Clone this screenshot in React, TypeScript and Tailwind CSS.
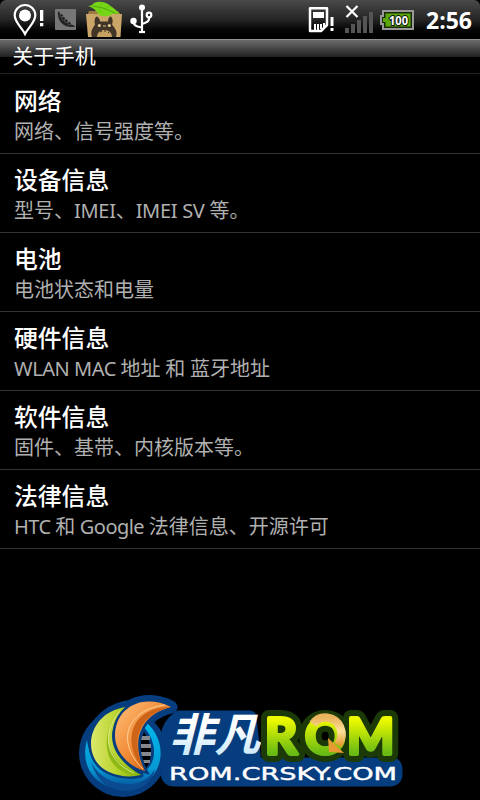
const sections = [
  { title: "网络", summary: "网络、信号强度等。", tracking: "" },
  { title: "设备信息", summary: "型号、IMEI、IMEI SV 等。", tracking: "tracking-[-0.3px]" },
  { title: "电池", summary: "电池状态和电量", tracking: "" },
  { title: "硬件信息", summary: "WLAN MAC 地址 和 蓝牙地址", tracking: "tracking-[-0.45px]" },
  { title: "软件信息", summary: "固件、基带、内核版本等。", tracking: "" },
  { title: "法律信息", summary: "HTC 和 Google 法律信息、开源许可", tracking: "tracking-[-0.55px]" },
]

function LocationIcon() {
  return (
    <svg width="34" height="38" viewBox="0 0 34 38" className="ml-3 shrink-0" fill="none">
      <path d="M13 33C10 26.500 2.700 21.500 2.700 14.300a10.300 10.300 0 0 1 20.600 0C23.300 21.500 16 26.500 13 33Z" stroke="#fff" strokeWidth="2.200" />
      <circle cx="13" cy="14.500" r="6" fill="#fff" />
      <path d="M28 9h3.300v11H28zM28 22h3.300v3.300H28z" fill="#fff" />
    </svg>
  )
}

function PeaPodIcon() {
  return (
    <svg width="21" height="21" viewBox="0 0 21 21" className="ml-[9px] shrink-0">
      <rect width="21" height="21" rx="1" fill="#767676" />
      <path d="M3 2C2 12 8 19 20 18L19 16.500C13 15 7 9 5 4Z" fill="#222" />
      <g fill="#1c1c1c" stroke="#767676" strokeWidth=".5">
        <circle cx="6.500" cy="6.500" r="1.600" />
        <circle cx="8.500" cy="9.500" r="1.700" />
        <circle cx="11.200" cy="12" r="1.700" />
        <circle cx="14.300" cy="14.300" r="1.500" />
      </g>
    </svg>
  )
}

function TotoroBoxIcon() {
  return (
    <svg width="37" height="38" viewBox="0 0 37 38" className="ml-[10px] shrink-0">
      <path d="M3 10h29l3 5H1Z" fill="#9c7a44" />
      <path d="M0 13h36l-1.500 23H2Z" fill="#caa669" />
      <path d="M2 5Q6 5 8 2Q15-1 22 3Q28 7 34 13Q30 12 27 13Q20 17 13 14Q9 7 2 5Z" fill="#76d516" />
      <path d="M7 5Q18 6 29 12" stroke="#4ea80c" fill="none" />
      <path d="M14 5l2-4M19 8l6-3M13 6l2 6" stroke="#5fbd10" strokeWidth=".6" fill="none" />
      <path d="M6 36C4 30 7 27 9 23.500 8 19 9 16 11 15.500c2 1 3 3 3 5h8c0-3 1-5 3-5 2 2 2 5 1 8 3 4 6 7 4 12.500Z" fill="#403526" />
      <path d="M11 36C11 26.500 26 26.500 26 36Z" fill="#c6a164" />
      <path d="M14 31l2-1M18 30h2M22 31l1 1" stroke="#403526" />
      <circle cx="13.300" cy="24.500" r="1.500" fill="#e6d09a" />
      <circle cx="23.300" cy="24.500" r="1.500" fill="#e6d09a" />
      <path d="M17 25h3" stroke="#d8be86" />
    </svg>
  )
}

function UsbIcon() {
  return (
    <svg width="24" height="38" viewBox="0 0 24 38" className="ml-[7px] shrink-0" fill="none" stroke="#fff" strokeWidth="2.200">
      <path d="M12 7v24M3.500 20v1q0 3 4 4.500l4.500 1M19 16v2q0 3-7 5" />
      <circle cx="12" cy="6.500" r="3" fill="#fff" stroke="none" />
      <circle cx="3.500" cy="20" r="3.200" fill="#fff" stroke="none" />
      <circle cx="19" cy="14" r="2.300" />
      <path d="M9 31h6" />
    </svg>
  )
}

function SimIcon() {
  return (
    <svg width="27" height="38" viewBox="0 0 27 38" className="shrink-0">
      <path d="M2 7.200h17v16.800l-6 6H2Z" fill="none" stroke="#fff" strokeWidth="2.500" strokeLinejoin="round" />
      <path d="M5 11h11v6H5zM6 23h2v6H6zM9 23h2v6H9zM12 23h2v5h-2zM15 22h2v4h-2z" fill="#fff" />
      <path d="M22.500 16h3v9h-3zM22.500 27h3v3h-3z" fill="#fff" />
    </svg>
  )
}

function SignalIcon() {
  return (
    <svg width="29" height="38" viewBox="0 0 29 38" className="ml-[10px] shrink-0">
      <path d="M0 27h4v5H0zM6 23h4v9H6zM12 19h4v13h-4zM18 15h4v17h-4zM24 11h4v21h-4z" fill="#555" />
      <path d="M1.500 5l11 11M12.500 5l-11 11" stroke="#fff" strokeWidth="2.200" />
    </svg>
  )
}

function BatteryIcon() {
  return (
    <svg width="34" height="20" viewBox="0 0 34 20" className="ml-[6px] shrink-0">
      <path d="M3 1h30v18H3v-5H1V6h2Z" fill="#1c2a0c" stroke="#999" strokeWidth="2" />
      <path d="M5.500 3.500h25v13h-25V12H3V8h2.500Z" fill="#5aa908" />
      <text x="18.500" y="14.500" textAnchor="middle" textLength="19" lengthAdjust="spacingAndGlyphs" fill="#fff" stroke="#111" strokeWidth="2.200" paintOrder="stroke" fontSize="13" className="font-['Noto_Sans',sans-serif] font-bold">100</text>
    </svg>
  )
}

function StatusBar() {
  return (
    <header className="flex h-[39px] items-center rounded-t-[6px] bg-linear-to-b from-[#4a4a4a] via-[#252525] to-black">
      <LocationIcon />
      <PeaPodIcon />
      <TotoroBoxIcon />
      <UsbIcon />
      <div className="ml-auto flex items-center pr-[8px]">
        <SimIcon />
        <SignalIcon />
        <BatteryIcon />
        <time className="ml-[12px] font-['Open_Sans',sans-serif] text-[23px] leading-[38px] font-bold text-white">2:56</time>
      </div>
    </header>
  )
}

// Latin runs sit tighter than the Chinese glyphs around them
function Summary({ text, tracking }: { text: string; tracking: string }) {
  return (
    <p className="text-[20px] leading-[26px] text-[#b0b0b0]">
      {text.split(/([A-Za-z ]+)/).map((part, i) =>
        i % 2 ? <span key={i} className={tracking}>{part}</span> : part
      )}
    </p>
  )
}

function RomLogo() {
  return (
    <svg width="330" height="110" viewBox="76 690 330 110" className="absolute bottom-0 left-[76px]">
      <defs>
        <linearGradient id="lime" x2="0" y2="1"><stop offset=".25" stopColor="#edf900" /><stop offset=".8" stopColor="#69bb14" /></linearGradient>
        <linearGradient id="leaf" x2="1"><stop stopColor="#dce86c" /><stop offset=".5" stopColor="#b9d42f" /><stop offset="1" stopColor="#7daf00" /></linearGradient>
        <linearGradient id="orange" x2="1" y2="1"><stop stopColor="#ffc07a" /><stop offset=".5" stopColor="#f08a35" /><stop offset="1" stopColor="#c04b00" /></linearGradient>
        <linearGradient id="cyan" x2="0" y2="1"><stop stopColor="#00b9ea" /><stop offset=".7" stopColor="#0698d4" /><stop offset="1" stopColor="#074d96" /></linearGradient>
        <linearGradient id="ice" x2="0" y2="1"><stop offset=".3" stopColor="#fff" /><stop offset="1" stopColor="#c0e4fa" /></linearGradient>
        <linearGradient id="arrow" x2="0" y2="1"><stop stopColor="#e9b45c" /><stop offset=".5" stopColor="#ffe09a" /><stop offset="1" stopColor="#e79a32" /></linearGradient>
      </defs>

      {/* navy backing behind the emblem and both lines of lettering */}
      <circle cx="123" cy="753" r="44" fill="#063d7e" />
      <g fill="#063d7e" stroke="#063d7e" strokeWidth="13" strokeLinejoin="round">
        <path d="M171 707C143 693 115 707 115 736c0 16 14 31 30 35C132 746 136 716 171 707Z" />
        <path d="M126 707C80 717 79 778 141 775Z" />
        <path d="M179 717h71l5 47h137q4 0 4 6v4q0 6-6 6H174q-7 0-7-8v-35q1-12 12-20Z" />
      </g>
      <path d="M144 732q7 10 7 20t-5 16q-10-17-2-36Z" fill="#000" />
      <path d="M142 736h8v4h-9zm-1 8h10v4h-10zm0 8h10v4h-10zm2 8h7v3h-6z" fill="#85898d" />

      <path d="M87 740c3 24 17 37 39 37 29 0 37-29 17-51l3-4c24 21 17 57-10 65-32 9-58-14-49-47Z" fill="url(#cyan)" />
      <path d="M91 762q13 24 42 22 15-2 22-15-5 20-28 22-27 0-36-29Z" fill="#0a4b91" />
      {/* navy gaps that keep the crescents apart */}
      <g strokeWidth="5" stroke="#063d7e" strokeLinejoin="round" paintOrder="stroke">
        <path d="M126 707C85 713 81 760 109 772q16 7 32 3C112 758 101 734 126 707Z" fill="url(#leaf)" />
      </g>
      <path d="M121 710C94 738 114 766 141 775C103 777 97 733 121 710Z" fill="#8eb915" />
      <path d="M120 711C99 736 108 762 134 773" fill="none" stroke="#eff4ad" strokeWidth=".7" />
      <path d="M171 707C143 693 115 707 115 736c0 16 14 31 30 35C132 746 136 716 171 707Z" fill="url(#orange)" stroke="#063d7e" strokeWidth="5" paintOrder="stroke" />
      <path d="M171 707C132 706 119 742 145 771C129 742 139 714 171 707Z" fill="#ce6418" />
      <path d="M165 705C125 710 116 743 143 769" fill="none" stroke="#ffe0ac" strokeWidth=".8" />

      <text x="169" y="751" textLength="91" lengthAdjust="spacingAndGlyphs" fill="url(#ice)" fontSize="45" className="font-['Liberation_Sans','Noto_Sans_CJK_SC',sans-serif] font-bold italic">非凡</text>
      <g fontSize="50" strokeLinejoin="round" className="font-['Lato',sans-serif] font-bold">
        <text x="265 305 347" y="754" stroke="#1c3a08" strokeWidth="16" fill="#1c3a08">ROM</text>
        <text x="265 305 347" y="754" stroke="url(#lime)" strokeWidth="4" fill="url(#lime)">ROM</text>
      </g>
      <path d="M313 724C320 714 335 716 340 727q4 9-2 18" fill="none" stroke="url(#arrow)" strokeWidth="8.500" />
      <path d="M328 738l16 15-15-1Z" fill="#e79a32" />
      <text x="169" y="779.500" textLength="228" lengthAdjust="spacingAndGlyphs" fill="#fff" stroke="#fff" strokeWidth=".4" fontSize="17.500" className="font-['DejaVu_Sans',sans-serif]">ROM.CRSKY.COM</text>
    </svg>
  )
}

export default function App() {
  return (
    <main className="relative h-[800px] w-[480px] overflow-hidden bg-black font-['Noto_Sans','Noto_Sans_CJK_SC',sans-serif]">
      <StatusBar />
      <h1 className="h-[35px] border-t border-b border-t-[#929292] border-b-[#222] bg-[linear-gradient(#6b6b6b,#202020_17px,#000_17px)] pl-[12.5px] text-[20.8px] leading-[33px] text-white">关于手机</h1>
      <ul className="pt-px">
        {sections.map((section) => (
          <li key={section.title} className="h-[79px] border-b border-[#333] pt-[9px] pl-[14px] whitespace-nowrap">
            <h2 className="mb-px text-[23.8px] leading-[34px] font-medium text-white">{section.title}</h2>
            <Summary text={section.summary} tracking={section.tracking} />
          </li>
        ))}
      </ul>
      <RomLogo />
    </main>
  )
}
